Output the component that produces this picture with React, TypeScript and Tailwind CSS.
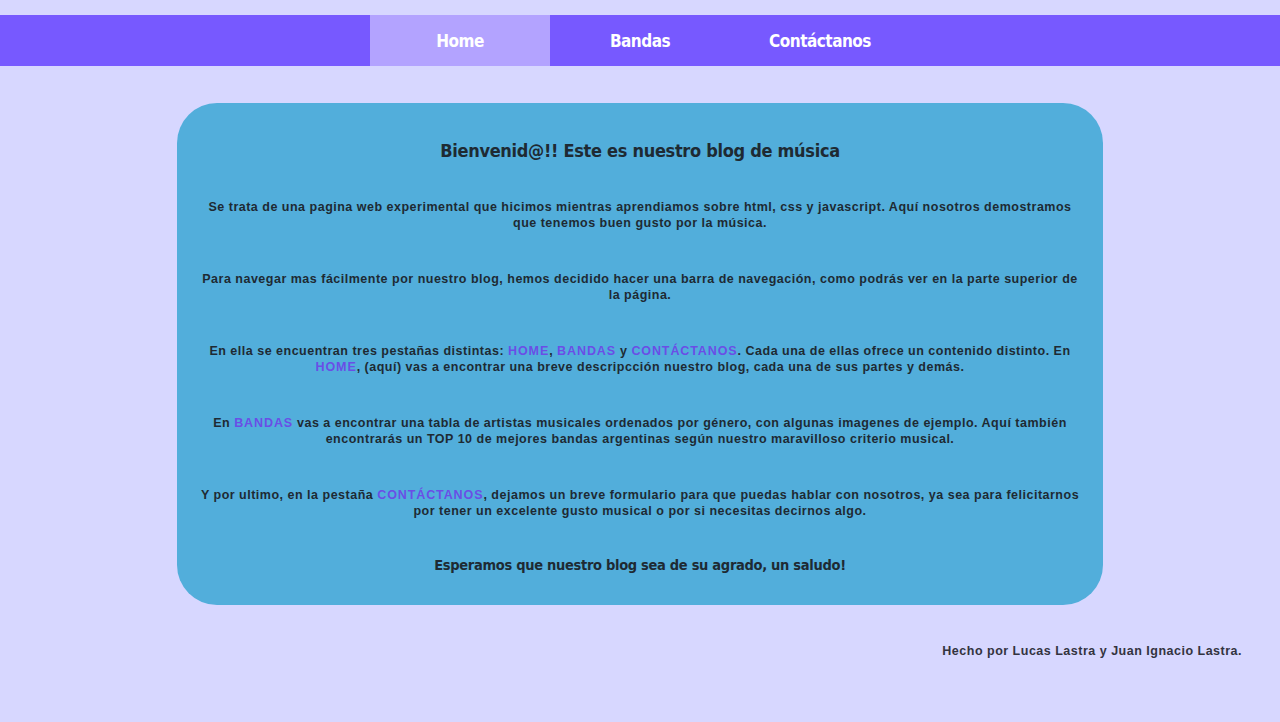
import React from "react";

const links = ["Home", "Bandas", "Contáctanos"];

function Hl({ children }: { children: React.ReactNode }) {
  return <span className="text-[#6a4ee6] tracking-[0.9px]">{children}</span>;
}

export default function App() {
  const [active, setActive] = React.useState("Home");

  return (
    <div className="min-h-[722px] bg-[#d7d7ff] pt-[15px] font-['Liberation_Sans',Arial,sans-serif]">
      <nav className="flex h-[51px] justify-center bg-[#7759ff]">
        {links.map((l) => (
          <button
            key={l}
            onClick={() => setActive(l)}
            className={`w-[180px] pt-[3px] font-['DejaVu_Sans_Condensed',sans-serif] text-[17px] font-bold tracking-[-0.5px] text-white ${
              active === l ? "bg-[#b3a3ff]" : ""
            }`}
          >
            {l}
          </button>
        ))}
      </nav>

      <main className="mx-auto mt-[37px] h-[502px] w-[926px] rounded-[40px] bg-[#52aedb] px-[22px] pt-[34px] text-center text-[#1e2a33]">
        <h1 className="font-['DejaVu_Sans_Condensed',sans-serif] text-[18px] font-bold tracking-[-0.3px]">
          Bienvenid@!! Este es nuestro blog de música
        </h1>

        <div className="text-[12.5px] font-bold leading-[15.5px] tracking-[0.5px]">
          <p className="mt-[36px]">
            Se trata de una pagina web experimental que hicimos mientras aprendiamos sobre html, css y javascript. Aquí nosotros demostramos que tenemos buen gusto por la música.
          </p>
          <p className="mt-[41px]">
            Para navegar mas fácilmente por nuestro blog, hemos decidido hacer una barra de navegación, como podrás ver en la parte superior de la página.
          </p>
          <p className="mt-[41px]">
            En ella se encuentran tres pestañas distintas: <Hl>HOME</Hl>, <Hl>BANDAS</Hl> y <Hl>CONTÁCTANOS</Hl>. Cada una de ellas ofrece un contenido distinto. En <Hl>HOME</Hl>, (aquí) vas a encontrar una breve descripcción nuestro blog, cada una de sus partes y demás.
          </p>
          <p className="mt-[41px]">
            En <Hl>BANDAS</Hl> vas a encontrar una tabla de artistas musicales ordenados por género, con algunas imagenes de ejemplo. Aquí también encontrarás un TOP 10 de mejores bandas argentinas según nuestro maravilloso criterio musical.
          </p>
          <p className="mt-[41px]">
            Y por ultimo, en la pestaña <Hl>CONTÁCTANOS</Hl>, dejamos un breve formulario para que puedas hablar con nosotros, ya sea para felicitarnos por tener un excelente gusto musical o por si necesitas decirnos algo.
          </p>
        </div>

        <p className="mt-[36px] font-['DejaVu_Sans_Condensed',sans-serif] text-[14.5px] font-bold tracking-[-0.3px]">
          Esperamos que nuestro blog sea de su agrado, un saludo!
        </p>
      </main>

      <footer className="mt-[37px] pr-[38px] text-right text-[12.5px] font-bold tracking-[0.5px] text-[#333340]">
        Hecho por Lucas Lastra y Juan Ignacio Lastra.
      </footer>
    </div>
  );
}
